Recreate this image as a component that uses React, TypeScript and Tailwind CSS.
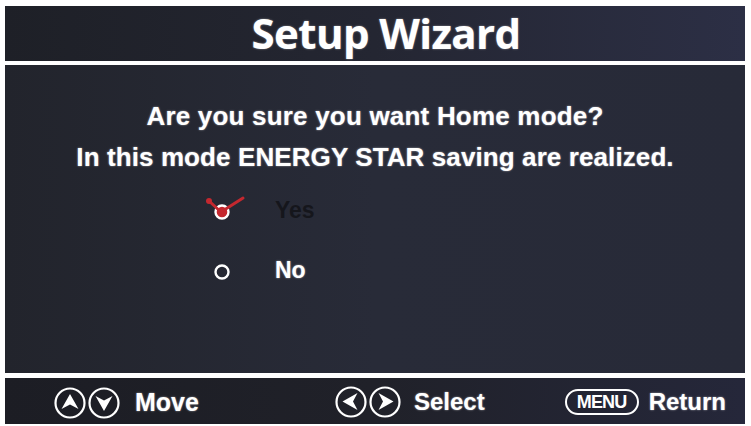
import React from 'react';

const osd = { fontFamily: '"Liberation Sans", Arial, sans-serif' };

const CircleArrows: React.FC<{ dirs: [string, string] }> = ({ dirs }) => {
  const arrow = (cx: number, dir: string) => {
    // arrowhead with notch, pointing up by default
    const rot = dir === 'up' ? 0 : dir === 'down' ? 180 : dir === 'left' ? -90 : 90;
    return (
      <path
        d={`M${cx} 7 L${cx + 8.5} 22 L${cx} 17.5 L${cx - 8.5} 22 Z`}
        fill="white"
        transform={`rotate(${rot} ${cx} 15.5)`}
      />
    );
  };
  return (
    <svg width="67" height="32" viewBox="0 0 67 32" className="shrink-0">
      <circle cx="16" cy="16" r="14.5" fill="none" stroke="white" strokeWidth="2.2" />
      <circle cx="50" cy="16" r="14.5" fill="none" stroke="white" strokeWidth="2.2" />
      {arrow(16, dirs[0])}
      {arrow(50, dirs[1])}
    </svg>
  );
};

const Radio: React.FC<{ checked?: boolean }> = ({ checked }) => (
  <svg width="46" height="30" viewBox="0 0 46 30" className="shrink-0">
    <circle cx="22" cy="17" r="6.5" fill={checked ? '#c4282f' : 'none'} stroke="white" strokeWidth="2.4" />
    {checked && (
      <>
        <path d="M9 6 L21 17 L43 3" fill="none" stroke="#c4282f" strokeWidth="3" strokeLinecap="round" strokeLinejoin="round" />
        <circle cx="9" cy="6" r="3" fill="#c4282f" />
      </>
    )}
  </svg>
);

export default function App() {
  const glow = '[text-shadow:0_0_2px_rgba(255,255,255,0.6)]';
  return (
    <div className="w-[751px] h-[426px] bg-white pt-[6px] pl-[5px] pr-[6px] flex flex-col overflow-hidden">
      <div className="h-[55px] bg-gradient-to-r from-[#1e2027] via-[#242632] to-[#2c2f45] flex items-center justify-center pl-[22px]">
        <h1
          className="text-white text-[42px] font-bold tracking-[-0.6px] leading-none pb-[1px] [text-shadow:0_0_2px_rgba(255,255,255,0.5)]"
          style={{ fontFamily: '"Open Sans", sans-serif' }}
        >
          Setup Wizard
        </h1>
      </div>

      <div className="mt-[4px] h-[308px] bg-gradient-to-r from-[#22242c] via-[#282b38] to-[#272a38] flex flex-col items-center pt-[31px]" style={osd}>
        <p className={`text-white text-[26px] font-bold leading-[41px] tracking-[0.2px] ${glow}`}>Are you sure you want Home mode?</p>
        <p className={`text-white text-[26px] font-bold leading-[41px] tracking-[0.1px] ${glow}`}>
          In this mode ENERGY STAR saving are realized.
        </p>

        <div className="self-start ml-[195px] mt-[17px] flex flex-col gap-[30px]">
          <div className="flex items-center h-[30px]">
            <Radio checked />
            <span className="ml-[29px] text-[23px] font-bold text-[#15161c]">Yes</span>
          </div>
          <div className="flex items-center h-[30px]">
            <Radio />
            <span className={`ml-[29px] text-[23px] font-bold text-white ${glow}`}>No</span>
          </div>
        </div>
      </div>

      <div className="mt-[5px] h-[46px] bg-gradient-to-r from-[#1c1d24] via-[#202129] to-[#25273a] flex items-center pl-[49px] text-white" style={osd}>
        <div className="flex items-center pt-[4px]">
          <CircleArrows dirs={['up', 'down']} />
          <span className={`ml-[14px] text-[25px] font-bold ${glow}`}>Move</span>
        </div>
        <div className="flex items-center ml-[136px] pt-[2px]">
          <CircleArrows dirs={['left', 'right']} />
          <span className={`ml-[12px] text-[24px] font-bold ${glow}`}>Select</span>
        </div>
        <div className="flex items-center ml-[80px] pt-[2px]">
          <div className="w-[74px] h-[26px] border-2 border-white rounded-full flex items-center justify-center">
            <span className="text-[18px] font-bold tracking-[-0.8px] leading-none">MENU</span>
          </div>
          <span className={`ml-[10px] text-[24px] font-bold ${glow}`}>Return</span>
        </div>
      </div>
    </div>
  );
}
